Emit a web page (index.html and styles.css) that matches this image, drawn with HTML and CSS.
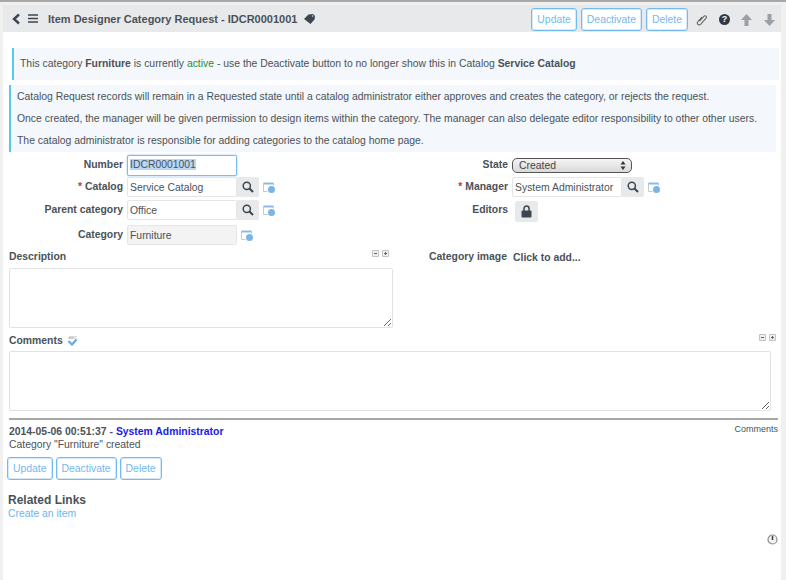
FILE: index.html
```html
<!DOCTYPE html>
<html lang="en">
<head>
  <meta charset="UTF-8">
  <title>Item Designer Category Request</title>
  <link rel="stylesheet" href="styles.css">
</head>
<body>
  <div class="panel">
    <div class="header">
      <svg class="nav-icon" width="10" height="12" viewBox="0 0 10 12"><path d="M8 1.500 3 6l5 4.500" fill="none" stroke="#3c4650" stroke-width="2.400"/></svg>
      <svg class="nav-icon menu-icon" width="10" height="9" viewBox="0 0 10 9"><path d="M0 1h10M0 4.500h10M0 8h10" stroke="#3c4650" stroke-width="1.400"/></svg>
      <span class="title">Item Designer Category Request - IDCR0001001</span>
      <svg class="tag-icon" width="11" height="10" viewBox="0 0 11 10"><path d="M0 5 4.500.5 9 0l2 2-.5 3.500L6.500 10z" fill="#3c4650"/><circle cx="8.600" cy="2" r=".8" fill="#e8e9eb"/></svg>
      <div class="header-actions">
        <button class="btn">Update</button>
        <button class="btn">Deactivate</button>
        <button class="btn">Delete</button>
        <svg class="clip-icon" width="12" height="12" viewBox="0 0 12 12"><path d="M3.500 7 7.800 2.200c1.600-1.700 3.600.3 2.100 2L5 9.600c-2.400 2.500-5-.1-2.900-2.500L6 2.800" transform="translate(0 .2)" fill="none" stroke="#5d666e" stroke-width="1.100"/></svg>
        <span class="help-icon">?</span>
        <svg class="up-icon" width="11" height="12" viewBox="0 0 11 12"><path d="M5.500 0 11 6H7.500v6h-4V6H0z" fill="#9aa0a5"/></svg>
        <svg class="down-icon" width="11" height="12" viewBox="0 0 11 12"><path d="M5.500 12 11 6H7.500V0h-4v6H0z" fill="#9aa0a5"/></svg>
      </div>
    </div>

    <div class="alert alert-top">
      This category <b>Furniture</b> is currently <span class="active">active</span> - use the Deactivate button to no longer show this in Catalog <b>Service Catalog</b>
    </div>
    <div class="alert alert-info">
      <p>Catalog Request records will remain in a Requested state until a catalog administrator either approves and creates the category, or rejects the request.</p>
      <p>Once created, the manager will be given permission to design items within the category. The manager can also delegate editor responsibility to other other users.</p>
      <p>The catalog administrator is responsible for adding categories to the catalog home page.</p>
    </div>

    <div class="form-grid">
      <div class="row">
        <label class="label">Number</label>
        <div class="input input-focus"><span class="selected">IDCR0001001</span></div>
      </div>
      <div class="row row-right">
        <label class="label">State</label>
        <div class="select">Created
          <svg class="select-arrows" width="6" height="9" viewBox="0 0 6 9"><path d="M3 0l2.500 3.500h-5zM3 9 .5 5.500h5z" fill="#333"/></svg>
        </div>
      </div>

      <div class="row">
        <label class="label"><span class="req">*</span> Catalog</label>
        <input class="input" value="Service Catalog">
        <span class="search-btn"><svg width="12" height="12" viewBox="0 0 12 12"><circle cx="4.800" cy="4.800" r="3.600" fill="none" stroke="#3c4650" stroke-width="1.500"/><path d="M7.500 7.500 11 11" stroke="#3c4650" stroke-width="2"/></svg></span>
        <svg class="ref-icon" width="13" height="12" viewBox="0 0 13 12"><path d="M.5 9.500V1.500h10v2" fill="none" stroke="#b5cfe9"/><path d="M.5 1.500h10" stroke="#8dbae4" stroke-width="2"/><path d="M.5 9.500h4" stroke="#b5cfe9"/><circle cx="8.500" cy="7.500" r="3.500" fill="#7db4e8"/></svg>
      </div>
      <div class="row row-right">
        <label class="label"><span class="req">*</span> Manager</label>
        <input class="input" value="System Administrator">
        <span class="search-btn"><svg width="12" height="12" viewBox="0 0 12 12"><circle cx="4.800" cy="4.800" r="3.600" fill="none" stroke="#3c4650" stroke-width="1.500"/><path d="M7.500 7.500 11 11" stroke="#3c4650" stroke-width="2"/></svg></span>
        <svg class="ref-icon" width="13" height="12" viewBox="0 0 13 12"><path d="M.5 9.500V1.500h10v2" fill="none" stroke="#b5cfe9"/><path d="M.5 1.500h10" stroke="#8dbae4" stroke-width="2"/><path d="M.5 9.500h4" stroke="#b5cfe9"/><circle cx="8.500" cy="7.500" r="3.500" fill="#7db4e8"/></svg>
      </div>

      <div class="row">
        <label class="label">Parent category</label>
        <input class="input" value="Office">
        <span class="search-btn"><svg width="12" height="12" viewBox="0 0 12 12"><circle cx="4.800" cy="4.800" r="3.600" fill="none" stroke="#3c4650" stroke-width="1.500"/><path d="M7.500 7.500 11 11" stroke="#3c4650" stroke-width="2"/></svg></span>
        <svg class="ref-icon" width="13" height="12" viewBox="0 0 13 12"><path d="M.5 9.500V1.500h10v2" fill="none" stroke="#b5cfe9"/><path d="M.5 1.500h10" stroke="#8dbae4" stroke-width="2"/><path d="M.5 9.500h4" stroke="#b5cfe9"/><circle cx="8.500" cy="7.500" r="3.500" fill="#7db4e8"/></svg>
      </div>
      <div class="row row-right">
        <label class="label">Editors</label>
        <span class="lock-btn"><svg width="11" height="13" viewBox="0 0 11 13"><path d="M3 6V3.500a2.500 2.500 0 0 1 5 0V6" fill="none" stroke="#3c4650" stroke-width="1.500"/><rect x=".5" y="5.500" width="10" height="7" rx="1" fill="#3c4650"/></svg></span>
      </div>

      <div class="row">
        <label class="label">Category</label>
        <input class="input input-readonly" value="Furniture" readonly>
        <svg class="ref-icon" width="13" height="12" viewBox="0 0 13 12"><path d="M.5 9.500V1.500h10v2" fill="none" stroke="#b5cfe9"/><path d="M.5 1.500h10" stroke="#8dbae4" stroke-width="2"/><path d="M.5 9.500h4" stroke="#b5cfe9"/><circle cx="8.500" cy="7.500" r="3.500" fill="#7db4e8"/></svg>
      </div>
      <div class="row row-right"></div>
    </div>

    <div class="desc-grid">
      <div class="desc-left">
        <div class="section-head">
          <label class="section-label">Description</label>
          <span class="size-btns">
            <svg width="18" height="7" viewBox="0 0 18 7"><path d="M.5.500h6v6h-6zM10.500.500h6v6h-6z" fill="#eee" stroke="#c4c4c4"/><path d="M2 3.500h3M12 3.500h3M13.500 2v3" stroke="#666"/></svg>
          </span>
        </div>
        <textarea class="textarea desc-text"></textarea>
      </div>
      <div class="image-field">
        <label class="label image-label">Category image</label>
        <span class="click-add">Click to add...</span>
      </div>
    </div>

    <div class="comments">
      <div class="section-head comments-head">
        <label class="section-label">Comments</label>
        <svg class="spell-icon" width="13" height="11" viewBox="0 0 13 11"><text x="6.500" y="3.500" text-anchor="middle" font-size="4" font-weight="bold" fill="#b0b5ba">ABC</text><path d="M2.500 6 6 9.500l4.500-5" fill="none" stroke="#6aa9e4" stroke-width="2.200"/></svg>
        <span class="size-btns">
          <svg width="18" height="7" viewBox="0 0 18 7"><path d="M.5.500h6v6h-6zM10.500.500h6v6h-6z" fill="#eee" stroke="#c4c4c4"/><path d="M2 3.500h3M12 3.500h3M13.500 2v3" stroke="#666"/></svg>
        </span>
      </div>
      <textarea class="textarea comments-text"></textarea>
    </div>

    <div class="activity">
      <div class="activity-head">
        <span class="activity-who">2014-05-06 00:51:37 - <a class="user-link" href="#">System Administrator</a></span>
        <span class="activity-tag">Comments</span>
      </div>
      <div class="activity-text">Category "Furniture" created</div>
    </div>

    <div class="bottom-actions">
      <button class="btn">Update</button>
      <button class="btn">Deactivate</button>
      <button class="btn">Delete</button>
    </div>

    <div class="related">
      <h3>Related Links</h3>
      <a href="#">Create an item</a>
    </div>

    <div class="clock-row">
      <svg width="11" height="11" viewBox="0 0 11 11"><circle cx="5.500" cy="5.500" r="4.500" fill="#f2f2f2" stroke="#8b8b8b" stroke-width="1.200"/><path d="M5.500 2v4" stroke="#444" stroke-width="1.600"/></svg>
    </div>
  </div>
</body>
</html>
```

FILE: styles.css
```css
* {
  box-sizing: border-box;
}
html, body {
  height: 100%;
}
body {
  margin: 0;
  overflow: hidden;
  background: #f0f0f0;
  border-top: 2px solid #a8a8a8;
  font-family: "Liberation Sans", Arial, sans-serif;
  font-size: 10.4px;
  color: #4a5258;
}
.panel {
  margin: 3px 5px 0 3px;
  height: 578px;
  background: #fff;
}

/* header */
.header {
  display: flex;
  align-items: center;
  height: 27px;
  background: #e8e9eb;
  padding-left: 8px;
}
.nav-icon {
  flex: none;
}
.menu-icon {
  margin-left: 7px;
}
.title {
  margin-left: 10px;
  font-size: 11px;
  font-weight: bold;
  color: #4a5258;
}
.tag-icon {
  margin-left: 7px;
}
.header-actions {
  display: flex;
  align-items: center;
  margin-left: auto;
  height: 27px;
  padding-top: 2px;
}
.btn {
  height: 23px;
  padding: 0 5px;
  margin-right: 4px;
  background: #fff;
  border: 1px solid #74bbf3;
  border-radius: 3px;
  box-shadow: inset 0 0 0 1px #d5e9fa;
  font-family: inherit;
  font-size: 10.4px;
  color: #74b8ef;
}
.clip-icon {
  margin-left: 4px;
}
.help-icon {
  width: 11px;
  height: 11px;
  margin-left: 11px;
  border-radius: 50%;
  background: #2f3a45;
  color: #fff;
  font-size: 9px;
  font-weight: bold;
  line-height: 11px;
  text-align: center;
}
.up-icon {
  margin-left: 11px;
}
.down-icon {
  margin: 0 6px 0 12px;
}

/* messages */
.alert {
  background: #f4f7fb;
  border-left: 2px solid #5bc8e8;
}
.alert-top {
  margin: 16px 2px 0 9px;
  height: 32px;
  padding: 0 0 0 6px;
  line-height: 31px;
}
.alert-info {
  margin: 5px 5px 0 6px;
  height: 67px;
  padding: 1px 0 0 6px;
}
.alert-info p {
  margin: 0;
  height: 22px;
  line-height: 22px;
}
.active {
  color: #2e8b2e;
}

/* form */
.form-grid {
  display: grid;
  grid-template-columns: 385px 1fr;
  grid-template-rows: 22px 23px 25px 23px;
  margin-top: 3px;
}
.row {
  display: flex;
  align-items: flex-start;
}
.label {
  flex: none;
  width: 124px;
  padding-right: 4px;
  padding-top: 4px;
  text-align: right;
  font-weight: bold;
}
.req {
  color: #c0392b;
}
.input {
  flex: none;
  width: 110px;
  height: 20px;
  padding: 0 2px;
  background: #fff;
  border: 1px solid #e6e6e6;
  border-radius: 2px;
  outline: none;
  font-family: inherit;
  font-size: 10.4px;
  color: #4a5258;
  line-height: 18px;
}
.input-focus {
  height: 21px;
  border-color: #7cbcf0;
  box-shadow: 0 0 2px #7cbcf0;
}
.selected {
  background: #b9d7f5;
}
.input-readonly {
  background: #f3f3f3;
}
.search-btn {
  display: flex;
  align-items: center;
  justify-content: center;
  width: 22px;
  height: 20px;
  background: #e8e9eb;
  border-radius: 0 2px 2px 0;
}
.ref-icon {
  margin: 5px 0 0 4px;
}
.select {
  position: relative;
  width: 120px;
  height: 15px;
  margin-top: 3px;
  padding-left: 6px;
  background: linear-gradient(#f4f4f4, #d9d9d9);
  border: 1px solid #555;
  border-radius: 5px;
  line-height: 13px;
  color: #444;
}
.select-arrows {
  position: absolute;
  top: 2px;
  right: 5px;
}
.lock-btn {
  display: flex;
  align-items: center;
  justify-content: center;
  width: 23px;
  height: 21px;
  margin: 1px 0 0 3px;
  background: #e8e9eb;
  border-radius: 2px;
}

/* description + comments */
.desc-grid {
  display: grid;
  grid-template-columns: 385px 1fr;
}
.section-head {
  display: flex;
  align-items: center;
  height: 12px;
}
.section-label {
  font-weight: bold;
}
.size-btns {
  display: flex;
  align-self: flex-start;
  margin-left: auto;
}
.desc-left {
  padding: 2px 0 0 6px;
  width: 391px;
}
.desc-left .section-head {
  margin-right: 4px;
}
.textarea {
  display: block;
  margin-top: 6px;
  background: #fff;
  border: 1px solid #e2e2e2;
  border-radius: 2px;
  outline: none;
}
.desc-text {
  width: 384px;
  height: 60px;
}
.image-field {
  display: flex;
}
.image-label {
  width: 123px;
  padding-top: 3px;
}
.click-add {
  margin-left: 2px;
  padding-top: 4px;
  font-weight: bold;
}
.comments {
  margin-top: 6px;
  padding-left: 6px;
}
.comments-head {
  padding-right: 4px;
}
.spell-icon {
  margin-left: 3px;
}
.comments-text {
  width: 762px;
  height: 60px;
  margin-top: 5px;
}

/* activity */
.activity {
  margin: 7px 3px 0 6px;
  padding-top: 6px;
  border-top: 2px solid #a8a8a8;
}
.activity-head {
  display: flex;
  justify-content: space-between;
  align-items: flex-start;
  height: 12px;
}
.activity-who {
  font-weight: bold;
}
.user-link {
  color: #1a1ae6;
  text-decoration: none;
}
.activity-tag {
  font-size: 9px;
  margin-top: -2px;
}
.activity-text {
  line-height: 13px;
}
.bottom-actions {
  display: flex;
  margin: 6px 0 0 4px;
}
.bottom-actions .btn {
  margin-right: 3px;
}
.related {
  margin: 14px 0 0 5px;
}
.related h3 {
  margin: 0;
  font-size: 12px;
  line-height: 13px;
  color: #4a5258;
}
.related a {
  display: block;
  color: #6ab7f0;
  text-decoration: none;
  line-height: 14px;
}
.clock-row {
  display: flex;
  justify-content: flex-end;
  margin-top: 13px;
  padding-right: 3px;
}
```
